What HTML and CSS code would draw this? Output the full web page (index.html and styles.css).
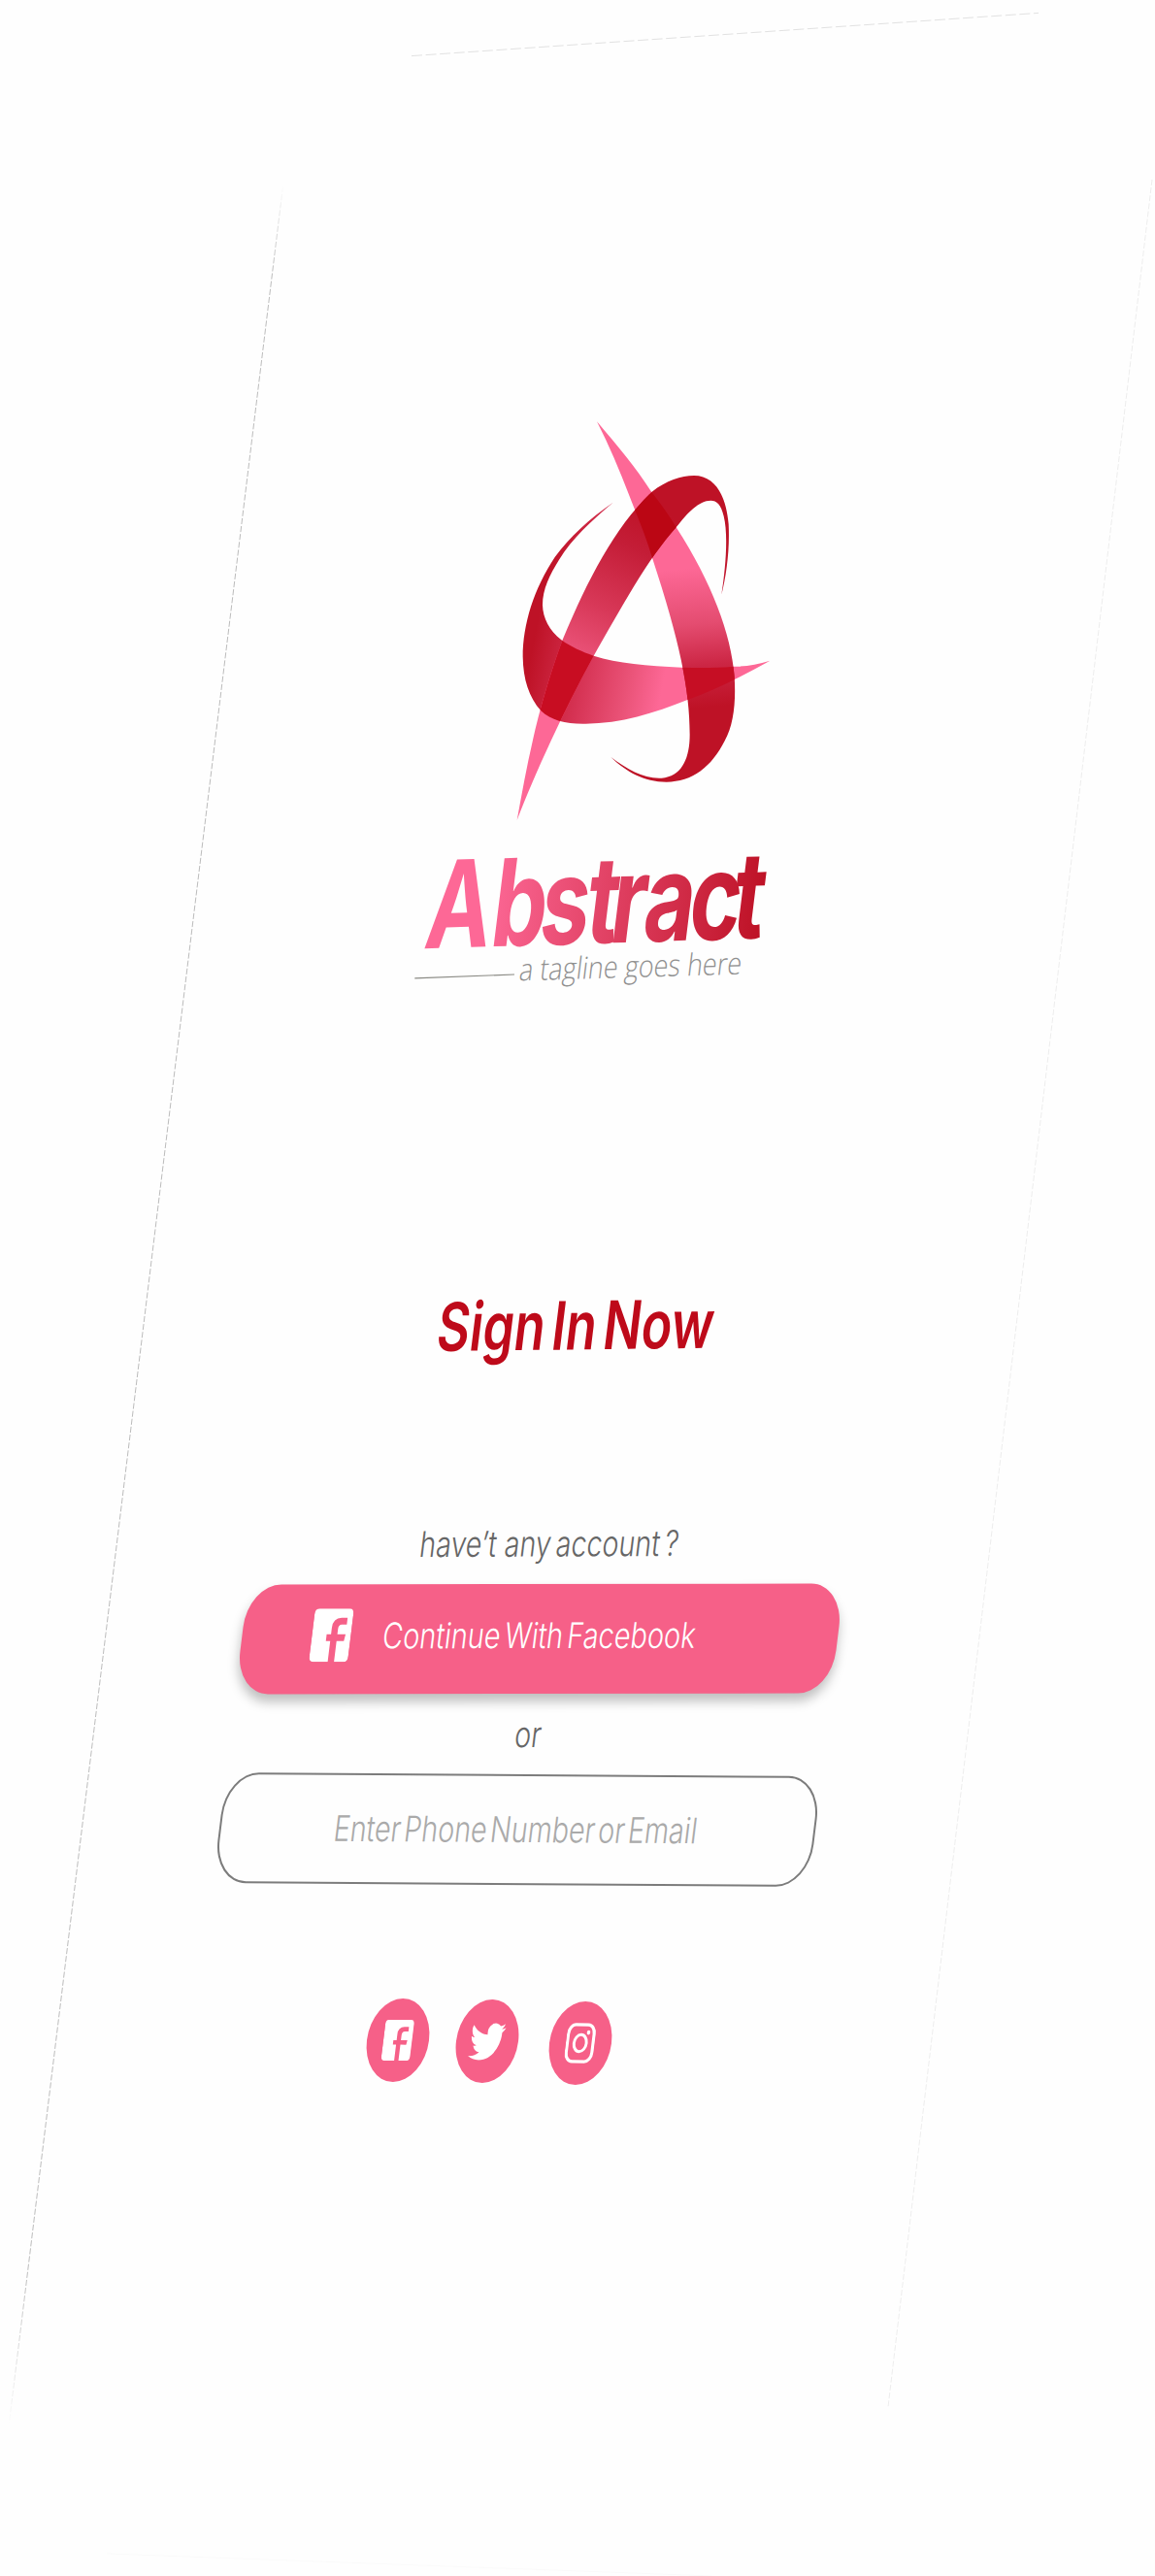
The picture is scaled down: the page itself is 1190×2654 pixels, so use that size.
FILE: index.html
```html
<!DOCTYPE html>
<html lang="en">
<head>
<meta charset="utf-8">
<title>Abstract – Sign In</title>
<link rel="stylesheet" href="styles.css">
</head>
<body>
<main class="screen">
  <svg class="frame" viewBox="0 0 1190 2654" aria-hidden="true">
    <defs>
      <linearGradient id="edge" gradientUnits="userSpaceOnUse" x1="0" y1="190" x2="0" y2="2500">
        <stop offset="0" stop-color="#aaa" stop-opacity="0"/><stop offset=".04" stop-color="#aaa"/>
        <stop offset=".93" stop-color="#aaa"/><stop offset="1" stop-color="#aaa" stop-opacity="0"/>
      </linearGradient>
    </defs>
    <path d="M291.500 192L9.500 2496" stroke="url(#edge)" stroke-width=".8" stroke-dasharray="6.200 2" fill="none"/>
    <path d="M424 57.600L1070 13.400" stroke="#e2e2e2" stroke-dasharray="11 3.600" fill="none"/>
    <path d="M1187 185L915 2480" stroke="#e9e9e9" stroke-dasharray="6 2.200" stroke-width=".8" fill="none"/>
    <path d="M110 2631L733 2654" stroke="#fafafa" fill="none"/>
  </svg>

  <svg class="logo" viewBox="400 410 420 620" role="img" aria-label="Abstract, a tagline goes here">
    <defs>
      <linearGradient id="gLeft" gradientUnits="userSpaceOnUse" x1="200" y1="960" x2="500" y2="330">
        <stop offset="0" stop-color="#fd6896"/><stop offset=".22" stop-color="#ee587f"/>
        <stop offset=".5" stop-color="#d83858"/><stop offset=".8" stop-color="#c41d37"/><stop offset="1" stop-color="#be1226"/>
      </linearGradient>
      <linearGradient id="gRight" gradientUnits="userSpaceOnUse" x1="600" y1="530" x2="640" y2="960">
        <stop offset="0" stop-color="#fd6896"/><stop offset=".4" stop-color="#e44c70"/>
        <stop offset=".7" stop-color="#cc2644"/><stop offset="1" stop-color="#be1226"/>
      </linearGradient>
      <linearGradient id="gBase" gradientUnits="userSpaceOnUse" x1="140" y1="800" x2="550" y2="880">
        <stop offset="0" stop-color="#be1226"/><stop offset=".4" stop-color="#d63354"/>
        <stop offset=".75" stop-color="#ea5378"/><stop offset="1" stop-color="#fd6896"/>
      </linearGradient>
      <linearGradient id="gWord" gradientUnits="userSpaceOnUse" x1="80" y1="0" x2="480" y2="0">
        <stop offset="0" stop-color="#fd6896"/><stop offset="1" stop-color="#be1226"/>
      </linearGradient>
      <path id="left" d="M98 1305C130 1130 160 960 240 745C320 555 400 400 515 290C560 255 605 240 645 240C715 240 745 310 752 390C756 470 745 550 730 608C742 530 752 425 737 365C729 330 715 317 697 317C660 317 625 355 590 400C500 500 420 650 335 797C240 970 150 1170 98 1305Z"/>
      <path id="right" d="M345 73C410 150 465 215 512 288C540 325 565 358 590 400C700 570 760 730 770 860C775 940 768 1010 740 1060C700 1140 640 1187 560 1187C490 1187 435 1155 388 1110C440 1148 490 1178 545 1175C610 1170 632 1110 632 1040C632 900 600 750 517 497C500 440 480 390 460 340C425 250 390 160 345 73Z"/>
      <path id="base" d="M880 812C840 824 805 830 768 830C715 835 660 835 607 833C500 828 410 820 335 797C300 785 265 770 235 748C198 720 178 680 177 640C177 590 200 545 228 500C270 433 325 382 395 323C320 375 262 428 215 492C150 590 116 700 116 800C117 870 135 925 172 967C205 998 250 1008 310 1007C420 1006 520 975 625 933C720 898 800 857 880 812Z"/>
      <clipPath id="clipLeft"><use href="#left"/></clipPath>
      <clipPath id="clipRight"><use href="#right"/></clipPath>
    </defs>
    <g transform="translate(500 410) scale(.33333)">
      <use href="#base" fill="url(#gBase)"/>
      <use href="#right" fill="url(#gRight)"/>
      <use href="#left" fill="url(#gLeft)"/>
      <use href="#base" fill="#c80d22" clip-path="url(#clipLeft)"/>
      <use href="#base" fill="#c60e24" clip-path="url(#clipRight)"/>
      <use href="#right" fill="#bb0614" clip-path="url(#clipLeft)"/>
    </g>
    <text class="word" fill="url(#gWord)" transform="matrix(.72 -.0223 -.1228 1 436 977.300)" x="-1 93 163 229 264 311 376 438" y="0">Abstract</text>
    <path d="M427.300 1007.800L530 1004" stroke="#8a8a84" stroke-width="1.200"/>
    <text class="tagline" transform="matrix(1 -.029 -.1228 1 534 1010.300)" textLength="229" lengthAdjust="spacingAndGlyphs">a tagline goes here</text>
  </svg>

  <h1 class="title">Sign In Now</h1>
  <p class="note note-account">have’t <span class="tight">any account ?</span></p>
  <button class="facebook" type="button">
    <svg class="facebook-icon" viewBox="0 0 40 55"><path fill="#fff" d="M4.500 0H35.500Q40 0 40 6V49Q40 55 35.500 55H26V33.500H33.500L34.500 26.500H26V21Q26 16.500 29.500 16.500H34.500V9.500H28.500Q19.500 9.500 19.500 20V26.500H15V33.500H19.500V55H4.500Q0 55 0 49V6Q0 0 4.500 0Z"/></svg>
    <span class="facebook-label">Continue With Facebook</span>
  </button>
  <p class="note note-or">or</p>
  <div class="field"><span class="field-label">Enter Phone Number or Email</span></div>

  <nav class="socials">
    <a class="social"><svg class="social-icon" viewBox="0 0 40 55" preserveAspectRatio="none"><path fill="#fff" d="M4.500 0H35.500Q40 0 40 6V49Q40 55 35.500 55H24.500V33.500H32.500L33.500 27.500H24.500V20.500Q24.500 15.500 28.500 15.500H33.500V9.500H27.500Q18.500 9.500 18.500 19.500V27.500H14V33.500H18.500V55H4.500Q0 55 0 49V6Q0 0 4.500 0Z"/></svg></a>
    <a class="social social-twitter"><svg class="bird" viewBox="0 2 24 20" preserveAspectRatio="none"><path fill="#fff" d="M23.953 4.570a10 10 0 01-2.825.775 4.958 4.958 0 002.163-2.723c-.951.555-2.005.959-3.127 1.184a4.920 4.920 0 00-8.384 4.482C7.690 8.095 4.067 6.130 1.640 3.162a4.822 4.822 0 00-.666 2.475c0 1.710.870 3.213 2.188 4.096a4.904 4.904 0 01-2.228-.616v.060a4.923 4.923 0 003.946 4.827 4.996 4.996 0 01-2.212.085 4.936 4.936 0 004.604 3.417 9.867 9.867 0 01-6.102 2.105c-.390 0-.779-.023-1.170-.067a13.995 13.995 0 007.557 2.209c9.053 0 13.998-7.496 13.998-13.985 0-.210 0-.420-.015-.630A9.935 9.935 0 0024 4.590z"/></svg></a>
    <a class="social social-instagram"><svg class="social-icon" viewBox="0 0 30 42" preserveAspectRatio="none"><g fill="none" stroke="#fff"><rect x="1.500" y="2" width="27" height="38" rx="7" ry="9.500" stroke-width="3.200"/><ellipse cx="15" cy="21" rx="6.500" ry="8.700" stroke-width="3"/></g><ellipse cx="22.500" cy="10" rx="1.800" ry="2.400" fill="#fff"/></svg></a>
  </nav>
</main>
</body>
</html>
```
FILE: styles.css
```css
* { box-sizing: border-box; }

body {
  margin: 0;
  background: #fefefe;
  font-family: Inter, "Liberation Sans", sans-serif;
}

.screen {
  position: relative;
  display: flex;
  flex-direction: column;
  align-items: flex-start;
  width: 1190px;
  height: 2654px;
  overflow: hidden;
}

/* card outline, drawn under the content */
.frame {
  position: absolute;
  inset: 0;
  width: 1190px;
  height: 2654px;
}

.logo {
  width: 420px;
  height: 620px;
  margin: 410px 0 0 400px;
}

.word {
  font: 700 125px Inter, sans-serif;
}

.tagline {
  font: 300 31.5px "Open Sans", sans-serif;
  fill: #909090;
}

.title {
  margin: 296.7px 0 0 448px;
  font-size: 69px;
  font-weight: 600;
  line-height: 80px;
  word-spacing: -8px;
  white-space: nowrap;
  color: #be0a1a;
  transform-origin: 0 65px;
  transform: matrix(.75, -.0087, -.1228, 1, 0, 0);
}

.note,
.facebook-label,
.field-label {
  font-size: 36.5px;
  font-weight: 300;
  line-height: 44px;
  white-space: nowrap;
  transform-origin: 0 35.3px;
}

.note {
  margin: 0;
  color: #666;
}

.note-account {
  margin: 162.7px 0 0 431px;
  transform: matrix(.785, -.003, -.1228, 1, 0, 0);
}

.tight {
  word-spacing: -4px;
}

.note-or {
  margin: 20.2px 0 0 529px;
  transform: matrix(.78, 0, -.1228, 1, 0, 0);
}

.facebook {
  display: flex;
  align-items: center;
  gap: 33px;
  width: 614px;
  height: 112.5px;
  margin: 18.8px 0 0 249px;
  padding: 0 0 7px 72px;
  border: 0;
  border-radius: 34px / 44px;
  background: #f66088;
  box-shadow: 0 8px 12px rgba(0, 0, 0, .25);
  color: #fff;
  font-family: inherit;
  transform: matrix(1, -.0015, -.1228, 1, 0, 0);
}

.facebook-icon {
  flex: none;
  width: 40px;
  height: 55px;
}

.facebook-label {
  word-spacing: -5px;
  transform: scaleX(.793);
}

.field {
  display: flex;
  align-items: center;
  width: 614px;
  height: 114px;
  margin: 19px 0 0 226px;
  padding-left: 116px;
  border: 2px solid #7c7c7c;
  border-radius: 34px / 44px;
  transform: matrix(1, .0065, -.1228, 1, 0, 0);
}

.field-label {
  color: #aaa;
  word-spacing: -6px;
  transform: scaleX(.786);
}

.socials {
  display: flex;
  margin: 116.7px 0 0 378px;
}

.social {
  display: flex;
  align-items: center;
  justify-content: center;
  width: 64px;
  height: 86px;
  border-radius: 50%;
  background: #f66088;
  transform: matrix(1, .008, -.1228, 1, 0, 0);
}

.social-twitter {
  margin: 1.6px 0 0 27.5px;
}

.social-instagram {
  margin: 3px 0 0 32px;
}

.social-icon {
  width: 29.5px;
  height: 42px;
}

.bird {
  width: 36px;
  height: 39px;
}
```
